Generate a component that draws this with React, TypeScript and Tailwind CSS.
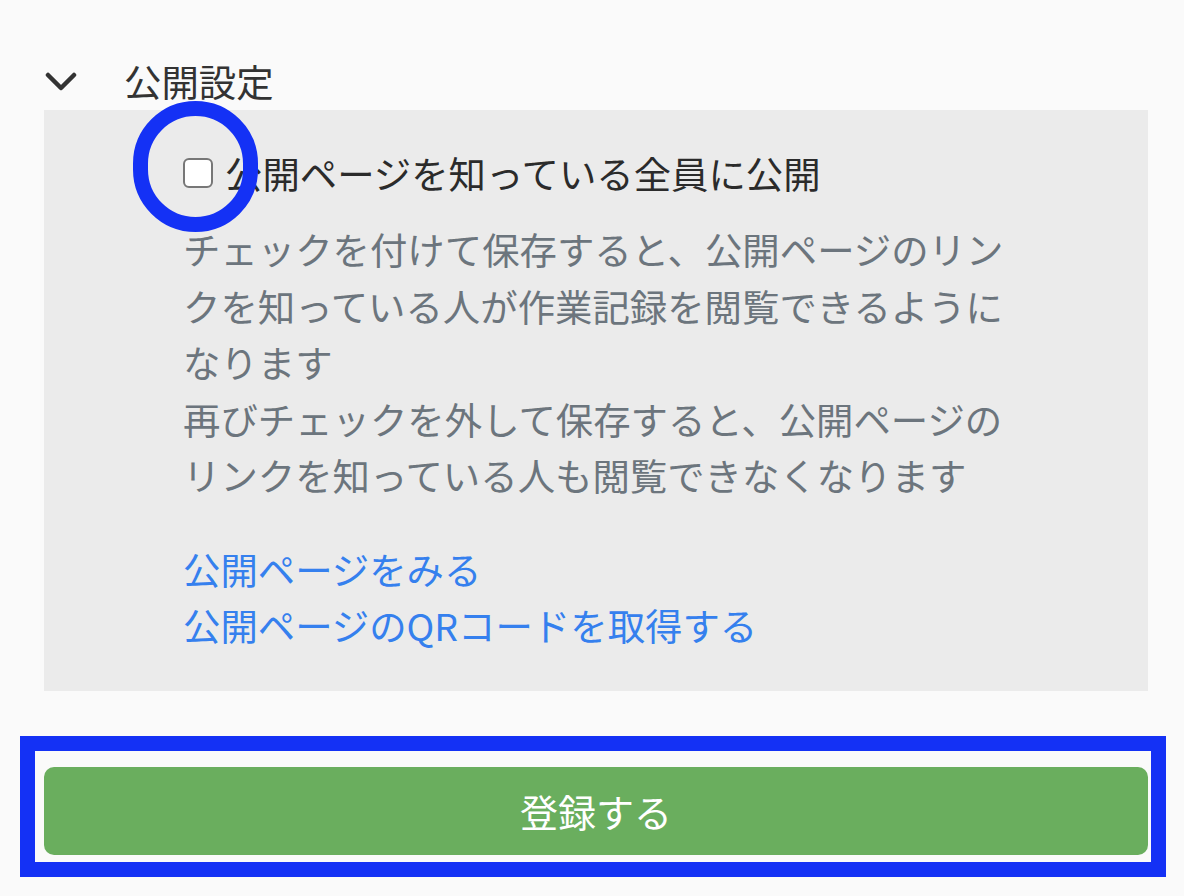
import React, { useState } from 'react';

const font = { fontFamily: '"Noto Sans CJK JP", "Noto Sans", sans-serif' };

const Chevron = () => (
  <svg width="32" height="20" viewBox="0 0 32 20" fill="none">
    <path d="M3 3 L16 16 L29 3" stroke="#333" strokeWidth="4.5" strokeLinecap="round" strokeLinejoin="round" />
  </svg>
);

const App = () => {
  const [isPublic, setIsPublic] = useState(false);

  return (
    <div className="min-h-screen w-[1184px] bg-[#fafafa] pt-[54px]" style={font}>
      {/* 公開設定 header */}
      <div className="flex h-[56px] items-center pl-[45px]">
        <Chevron />
        <span className="ml-[47px] text-[37.4px] leading-none text-[#333]">公開設定</span>
      </div>

      {/* panel */}
      <div className="ml-[44px] mr-[36px] bg-[#ebebeb] pb-[38px] pl-[139px] pt-[35px]">
        <label className="flex h-[56px] items-center">
          <span className="relative flex h-[30px] w-[30px] items-center justify-center">
            <input
              type="checkbox"
              checked={isPublic}
              onChange={(e) => setIsPublic(e.target.checked)}
              className="h-[30px] w-[30px] appearance-none rounded-[6px] border-[2.5px] border-[#777] bg-white"
            />
            <span className="pointer-events-none absolute left-[-50px] top-[-57px] h-[131px] w-[125px] rounded-full border-[15px] border-[#1431f5]" />
          </span>
          <span className="ml-[12px] text-[37.4px] leading-[56px] text-[#2b2b2b]">公開ページを知っている全員に公開</span>
        </label>

        <div className="mt-[20px] w-[830px] text-[37.4px] leading-[56.5px] text-[#6c757d]">
          <p>チェックを付けて保存すると、公開ページのリンクを知っている人が作業記録を閲覧できるようになります</p>
          <p>再びチェックを外して保存すると、公開ページのリンクを知っている人も閲覧できなくなります</p>
        </div>

        <div className="mt-[37px] flex flex-col text-[37.4px] leading-[56px] text-[#3580ee]">
          <a href="#" className="self-start">公開ページをみる</a>
          <a href="#" className="self-start">公開ページのQRコードを取得する</a>
        </div>
      </div>

      {/* submit */}
      <div className="relative ml-[44px] mr-[36px] mt-[76px]">
        <button className="flex h-[88px] w-full items-center justify-center rounded-[10px] bg-[#6aae5e] text-[38px] text-white">
          登録する
        </button>
        <div className="pointer-events-none absolute bottom-[-22px] left-[-24px] right-[-18px] top-[-31px] border-[15px] border-[#1431f5]" />
      </div>
    </div>
  );
};

export default App;
